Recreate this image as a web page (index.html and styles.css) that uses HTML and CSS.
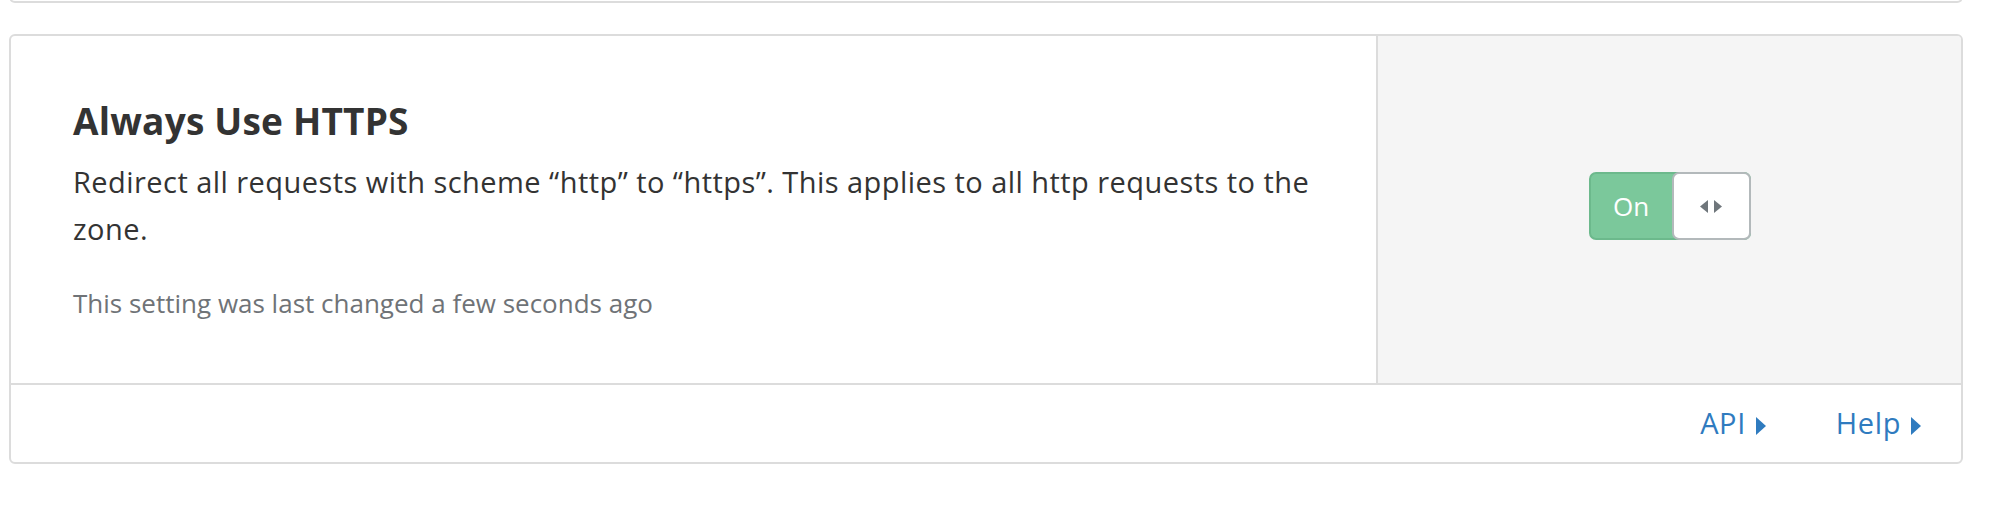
FILE: index.html
```html
<!DOCTYPE html>
<html lang="en">
<head>
<meta charset="utf-8">
<title>Always Use HTTPS</title>
<link rel="stylesheet" href="styles.css">
</head>
<body>
<div class="page">
  <div class="card card-stub"></div>
  <div class="card setting">
    <div class="setting-main">
      <div class="setting-info">
        <h3 class="setting-title">Always Use HTTPS</h3>
        <p class="setting-desc">Redirect all requests with scheme “http” to “https”. This applies to all http requests to the zone.</p>
        <p class="setting-meta">This setting was last changed a few seconds ago</p>
      </div>
      <div class="setting-control">
        <div class="toggle">
          <span class="toggle-label">On</span>
          <span class="toggle-knob">
            <svg class="knob-icon" width="24" height="13" viewBox="0 0 24 13" aria-hidden="true">
              <path d="M9 0 L9 13 L1 6.5 Z" fill="#6f767b"/>
              <path d="M15 0 L15 13 L23 6.5 Z" fill="#6f767b"/>
            </svg>
          </span>
        </div>
      </div>
    </div>
    <div class="setting-footer">
      <a class="footer-link" href="#">API<svg class="caret" width="10" height="18" viewBox="0 0 10 18" aria-hidden="true"><path d="M0 0 L10 9 L0 18 Z" fill="#2f7bbf"/></svg></a>
      <a class="footer-link" href="#">Help<svg class="caret" width="10" height="18" viewBox="0 0 10 18" aria-hidden="true"><path d="M0 0 L10 9 L0 18 Z" fill="#2f7bbf"/></svg></a>
    </div>
  </div>
</div>
</body>
</html>
```

FILE: styles.css
```css
html, body {
  margin: 0;
  padding: 0;
  background: #ffffff;
  overflow: hidden;
}

body {
  font-family: "Open Sans", Lato, sans-serif;
  color: #333333;
}

.page {
  padding: 0 36px 0 9px;
}

.card {
  border: 2px solid #dcdcdc;
  border-radius: 6px;
  background: #ffffff;
}

.card-stub {
  border-top: none;
  height: 39px;
  margin-top: -38px;
  border-radius: 0 0 6px 6px;
}

.setting {
  margin-top: 31px;
  overflow: hidden;
}

.setting-main {
  display: flex;
  border-bottom: 2px solid #dcdcdc;
}

.setting-info {
  flex: 0 0 70%;
  box-sizing: border-box;
  padding: 63px 40px 65px 62px;
}

.setting-title {
  margin: 0;
  font-size: 37px;
  line-height: 44px;
  font-weight: 700;
  letter-spacing: 0.2px;
  color: #333333;
}

.setting-desc {
  margin: 15px 0 0 0;
  font-size: 29px;
  line-height: 47px;
  letter-spacing: 0.45px;
  color: #333333;
}

.setting-meta {
  margin: 36px 0 0 0;
  font-size: 26px;
  line-height: 30px;
  color: #6f7377;
}

.setting-control {
  flex: 1 1 auto;
  background: #f5f5f5;
  border-left: 2px solid #dcdcdc;
  display: flex;
  align-items: center;
  justify-content: center;
}

.toggle {
  display: flex;
  width: 162px;
  height: 68px;
  box-sizing: border-box;
  margin-bottom: 7px;
  background: #7bc89b;
  border: 2px solid #6cb98c;
  border-radius: 7px;
}

.toggle-label {
  flex: 0 0 81px;
  display: flex;
  align-items: center;
  justify-content: center;
  color: #ffffff;
  font-size: 26px;
  line-height: 1;
}

.toggle-knob {
  flex: 1 1 auto;
  display: flex;
  align-items: center;
  justify-content: center;
  margin: -2px -2px -2px 0;
  background: #ffffff;
  border: 2px solid #b3b9bb;
  border-radius: 7px;
}

.knob-icon {
  display: block;
}

.setting-footer {
  display: flex;
  justify-content: flex-end;
  gap: 70px;
  padding: 24px 40px 25px 0;
}

.footer-link {
  font-size: 29px;
  line-height: 28px;
  letter-spacing: 0.6px;
  color: #2f7bbf;
  text-decoration: none;
}

.caret {
  margin-left: 10px;
  vertical-align: -1px;
}
```
